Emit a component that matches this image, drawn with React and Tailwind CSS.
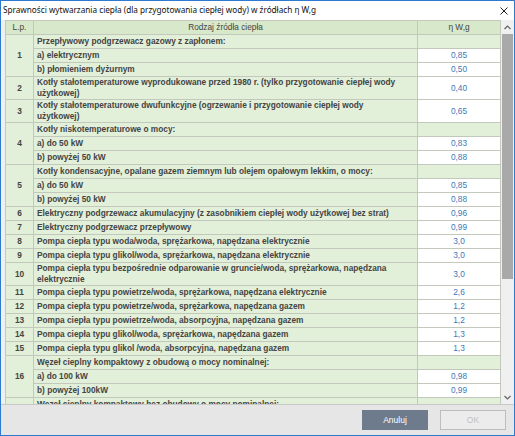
import React from "react";

const groups = [
  { n: "1", items: [
    { t: "Przepływowy podgrzewacz gazowy z zapłonem:" },
    { t: "a) elektrycznym", v: "0,85" },
    { t: "b) płomieniem dyżurnym", v: "0,50" },
  ]},
  { n: "2", items: [{ t: "Kotły stałotemperaturowe wyprodukowane przed 1980 r. (tylko przygotowanie ciepłej wody", t2: "użytkowej)", v: "0,40" }] },
  { n: "3", items: [{ t: "Kotły stałotemperaturowe dwufunkcyjne (ogrzewanie i przygotowanie ciepłej wody", t2: "użytkowej)", v: "0,65" }] },
  { n: "4", items: [
    { t: "Kotły niskotemperaturowe o mocy:" },
    { t: "a) do 50 kW", v: "0,83" },
    { t: "b) powyżej 50 kW", v: "0,88" },
  ]},
  { n: "5", items: [
    { t: "Kotły kondensacyjne, opalane gazem ziemnym lub olejem opałowym lekkim, o mocy:" },
    { t: "a) do 50 kW", v: "0,85" },
    { t: "b) powyżej 50 kW", v: "0,88" },
  ]},
  { n: "6", items: [{ t: "Elektryczny podgrzewacz akumulacyjny (z zasobnikiem ciepłej wody użytkowej bez strat)", v: "0,96" }] },
  { n: "7", items: [{ t: "Elektryczny podgrzewacz przepływowy", v: "0,99" }] },
  { n: "8", items: [{ t: "Pompa ciepła typu woda/woda, sprężarkowa, napędzana elektrycznie", v: "3,0" }] },
  { n: "9", items: [{ t: "Pompa ciepła typu glikol/woda, sprężarkowa, napędzana elektrycznie", v: "3,0" }] },
  { n: "10", items: [{ t: "Pompa ciepła typu bezpośrednie odparowanie w gruncie/woda, sprężarkowa, napędzana", t2: "elektrycznie", v: "3,0" }] },
  { n: "11", items: [{ t: "Pompa ciepła typu powietrze/woda, sprężarkowa, napędzana elektrycznie", v: "2,6" }] },
  { n: "12", items: [{ t: "Pompa ciepła typu powietrze/woda, sprężarkowa, napędzana gazem", v: "1,2" }] },
  { n: "13", items: [{ t: "Pompa ciepła typu powietrze/woda, absorpcyjna, napędzana gazem", v: "1,2" }] },
  { n: "14", items: [{ t: "Pompa ciepła typu glikol/woda, sprężarkowa, napędzana gazem", v: "1,3" }] },
  { n: "15", items: [{ t: "Pompa ciepła typu glikol /woda, absorpcyjna, napędzana gazem", v: "1,3" }] },
  { n: "16", items: [
    { t: "Węzeł cieplny kompaktowy z obudową o mocy nominalnej:" },
    { t: "a) do 100 kW", v: "0,98" },
    { t: "b) powyżej 100kW", v: "0,99" },
  ]},
  { n: "17", items: [
    { t: "Węzeł cieplny kompaktowy bez obudowy o mocy nominalnej:" },
    { t: "a) do 100 kW", v: "0,95" },
    { t: "b) powyżej 100kW", v: "0,97" },
  ]},
];

const spanClass = { 1: "row-span-1", 2: "row-span-2", 3: "row-span-3" };

export default function App() {
  const cells = [];
  groups.forEach((g) => {
    cells.push(
      <div
        key={"n" + g.n}
        className={"col-start-1 bg-[#e2efd9] flex items-center justify-center font-bold text-[#444] leading-none overflow-hidden " + spanClass[g.items.length]}
      >
        {g.n}
      </div>
    );
    g.items.forEach((it, i) => {
      const h = it.t2 ? "h-[22px]" : "h-[13px]";
      cells.push(
        <div key={"t" + g.n + i} className={"col-start-2 bg-[#e2efd9] pl-[3px] flex flex-col justify-center font-bold text-[#444] leading-[11px] whitespace-nowrap overflow-hidden " + h}>
          <span>{it.t}</span>
          {it.t2 && <span>{it.t2}</span>}
        </div>
      );
      cells.push(
        <div key={"v" + g.n + i} className={"col-start-3 flex items-center justify-center text-[#3a78b8] leading-none overflow-hidden " + (it.v ? "bg-white " : "bg-[#e2efd9] ") + h}>
          {it.v || ""}
        </div>
      );
    });
  });

  return (
    <div className="w-[515px] h-[436px] border border-[#2d7ad0] bg-[#f0f0f0] flex flex-col overflow-hidden font-['Liberation_Sans',Arial,sans-serif] text-[8.3px]">
      {/* Title bar */}
      <div className="h-[19px] shrink-0 bg-white flex items-center justify-between pl-[2px] pr-[6px]">
        <span className="font-['Noto_Sans',sans-serif] text-[8.2px] text-[#111]">
          Sprawności wytwarzania ciepła (dla przygotowania ciepłej wody) w źródłach η W,g
        </span>
        <svg width="8" height="8" viewBox="0 0 8 8" className="shrink-0">
          <path d="M0.5 0.5 L7.5 7.5 M7.5 0.5 L0.5 7.5" stroke="#222" strokeWidth="1" />
        </svg>
      </div>

      {/* Content */}
      <div className="flex-1 min-h-0 flex pl-[4px] border-b border-[#c9c9c9]">
        <div className="w-[496px] overflow-hidden">
          <div className="grid grid-cols-[27px_383px_82px] gap-px p-px bg-[#c2c9bc] w-[496px]">
            <div className="col-start-1 h-[13px] bg-[#d8e8ca] flex items-center justify-center text-[#444] leading-none">L.p.</div>
            <div className="col-start-2 h-[13px] bg-[#d8e8ca] flex items-center justify-center text-[#444] leading-none">Rodzaj źródła ciepła</div>
            <div className="col-start-3 h-[13px] bg-[#d8e8ca] flex items-center justify-center text-[#444] leading-none">η W,g</div>
            {cells}
          </div>
        </div>
        {/* Scrollbar */}
        <div className="w-[13px] bg-[#f0f0f0] flex flex-col">
          <div className="h-[14px] flex items-center justify-center">
            <svg width="7" height="5" viewBox="0 0 7 5"><path d="M0.5 4 L3.5 1 L6.5 4" fill="none" stroke="#606060" strokeWidth="1.2" /></svg>
          </div>
          <div className="mx-[1px] h-[245px] bg-[#a9a9a9]" />
          <div className="flex-1" />
          <div className="h-[14px] flex items-center justify-center">
            <svg width="7" height="5" viewBox="0 0 7 5"><path d="M0.5 1 L3.5 4 L6.5 1" fill="none" stroke="#606060" strokeWidth="1.2" /></svg>
          </div>
        </div>
      </div>

      {/* Bottom bar */}
      <div className="h-[30px] shrink-0 bg-[#e6e6e6] flex items-center justify-end gap-[12px] pr-[8px]">
        <button className="w-[66px] h-[20px] bg-[#6e7b8c] text-white text-[8.5px] font-['Liberation_Sans',Arial,sans-serif]">Anuluj</button>
        <button className="w-[66px] h-[20px] bg-[#ececec] border border-[#bdbdbd] text-[#bfbfbf] text-[8.5px] font-['Liberation_Sans',Arial,sans-serif]">OK</button>
      </div>
    </div>
  );
}
